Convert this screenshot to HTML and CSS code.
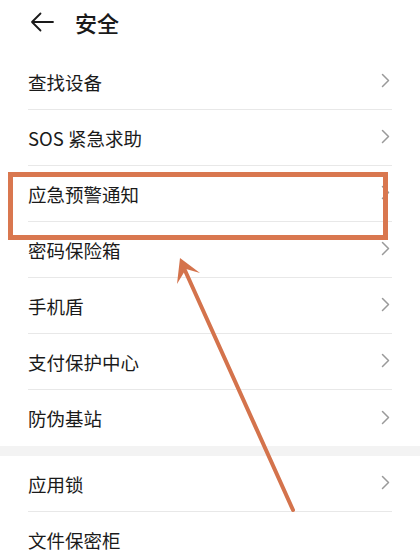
FILE: index.html
```html
<!DOCTYPE html>
<html lang="zh-CN">
<head>
<meta charset="utf-8">
<title>安全</title>
<link rel="stylesheet" href="styles.css">
</head>
<body>
<div class="page">
  <header class="header">
    <svg class="back" width="24" height="20" viewBox="0 0 24 20" aria-hidden="true">
      <path d="M23 10H2M10.5 1.5L2 10l8.5 8.5" fill="none" stroke="#1a1a1a" stroke-width="1.8" stroke-linecap="round" stroke-linejoin="round"/>
    </svg>
    <h1 class="title">安全</h1>
  </header>

  <ul class="list">
    <li class="row"><span class="label">查找设备</span><svg class="chev" width="9" height="15" viewBox="0 0 9 15"><path d="M1.5 1.5L7.5 7.5L1.5 13.5"/></svg></li>
    <li class="row"><span class="label">SOS 紧急求助</span><svg class="chev" width="9" height="15" viewBox="0 0 9 15"><path d="M1.5 1.5L7.5 7.5L1.5 13.5"/></svg></li>
    <li class="row"><span class="label">应急预警通知</span><svg class="chev" width="9" height="15" viewBox="0 0 9 15"><path d="M1.5 1.5L7.5 7.5L1.5 13.5"/></svg></li>
    <li class="row"><span class="label">密码保险箱</span><svg class="chev" width="9" height="15" viewBox="0 0 9 15"><path d="M1.5 1.5L7.5 7.5L1.5 13.5"/></svg></li>
    <li class="row"><span class="label">手机盾</span><svg class="chev" width="9" height="15" viewBox="0 0 9 15"><path d="M1.5 1.5L7.5 7.5L1.5 13.5"/></svg></li>
    <li class="row"><span class="label">支付保护中心</span><svg class="chev" width="9" height="15" viewBox="0 0 9 15"><path d="M1.5 1.5L7.5 7.5L1.5 13.5"/></svg></li>
    <li class="row last"><span class="label">防伪基站</span><svg class="chev" width="9" height="15" viewBox="0 0 9 15"><path d="M1.5 1.5L7.5 7.5L1.5 13.5"/></svg></li>
  </ul>
  <div class="gap"></div>
  <ul class="list">
    <li class="row"><span class="label">应用锁</span><svg class="chev" width="9" height="15" viewBox="0 0 9 15"><path d="M1.5 1.5L7.5 7.5L1.5 13.5"/></svg></li>
    <li class="row last"><span class="label">文件保密柜</span></li>
  </ul>

  <svg class="annot" width="420" height="555" viewBox="0 0 420 555" aria-hidden="true">
    <rect x="10.5" y="174.5" width="375" height="63" fill="none" stroke="#d9774f" stroke-width="5"/>
    <line x1="293" y1="510" x2="183" y2="266" stroke="#d4734c" stroke-width="4" stroke-linecap="round"/>
    <polygon points="180,258 200,273 186,269 177,284" fill="#d4734c"/>
  </svg>
</div>
</body>
</html>
```

FILE: styles.css
```css
* { box-sizing: border-box; }
html, body { margin: 0; padding: 0; background: #fff; }
body {
  font-family: "Noto Sans CJK SC", "Noto Sans", sans-serif;
  color: #1a1a1a;
}
.page {
  position: relative;
  width: 420px;
  height: 555px;
  overflow: hidden;
  background: #fff;
}
.header {
  display: flex;
  align-items: center;
  height: 44px;
  padding-left: 30px;
  margin-bottom: 10px;
}
.back { display: block; flex: none; }
.title {
  margin: 0 0 0 21px;
  font-size: 22px;
  font-weight: 500;
  line-height: 1;
}
.list {
  list-style: none;
  margin: 0;
  padding: 0 28px;
}
.row {
  display: flex;
  align-items: center;
  justify-content: space-between;
  height: 56px;
  border-bottom: 1px solid #e8e8e8;
}
.row.last { border-bottom: none; }
.label {
  font-size: 18.5px;
  line-height: 1;
  padding-top: 1px;
}
.chev {
  display: block;
  flex: none;
  margin-right: 2px;
  margin-top: -2px;
}
.chev path {
  fill: none;
  stroke: #9a9a9a;
  stroke-width: 1.5;
  stroke-linecap: round;
  stroke-linejoin: round;
}
.gap {
  height: 10px;
  background: #f3f3f3;
}
.annot {
  position: absolute;
  left: 0;
  top: 0;
  pointer-events: none;
}
```
